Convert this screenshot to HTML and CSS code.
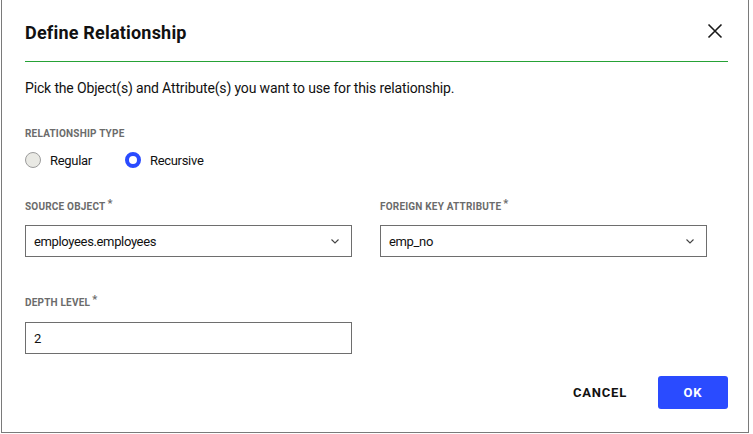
FILE: index.html
```html
<!DOCTYPE html>
<html>
<head>
<meta charset="utf-8">
<link rel="stylesheet" href="styles.css">
</head>
<body>
<div class="dialog">
  <div class="header">
    <h1 class="title">Define Relationship</h1>
    <button class="close" aria-label="Close">
      <svg width="16" height="16" viewBox="0 0 16 16"><path d="M1.5 1.5 L14.5 14.5 M14.5 1.5 L1.5 14.5" stroke="#1a1a1a" stroke-width="1.6" fill="none"/></svg>
    </button>
  </div>
  <p class="desc">Pick the Object(s) and Attribute(s) you want to use for this relationship.</p>

  <div class="label">RELATIONSHIP TYPE</div>
  <div class="radios">
    <label class="radio"><span class="dot"></span>Regular</label>
    <label class="radio"><span class="dot on"></span>Recursive</label>
  </div>

  <div class="grid">
    <div class="field">
      <div class="label">SOURCE OBJECT<sup class="req">*</sup></div>
      <div class="select"><span>employees.employees</span>
        <svg class="chev" width="8" height="5" viewBox="0 0 8 5"><path d="M0.5 0.5 L4 4 L7.5 0.5" stroke="#444" stroke-width="1.1" fill="none"/></svg>
      </div>
    </div>
    <div class="field">
      <div class="label">FOREIGN KEY ATTRIBUTE<sup class="req">*</sup></div>
      <div class="select"><span>emp_no</span>
        <svg class="chev" width="8" height="5" viewBox="0 0 8 5"><path d="M0.5 0.5 L4 4 L7.5 0.5" stroke="#444" stroke-width="1.1" fill="none"/></svg>
      </div>
    </div>
    <div class="field depth">
      <div class="label">DEPTH LEVEL<sup class="req">*</sup></div>
      <div class="input">2</div>
    </div>
  </div>

  <div class="actions">
    <button class="btn cancel">CANCEL</button>
    <button class="btn ok">OK</button>
  </div>
</div>
</body>
</html>
```

FILE: styles.css
```css
html, body {
  margin: 0;
  padding: 0;
  background: #ffffff;
}
body {
  font-family: Roboto, "Liberation Sans", sans-serif;
  color: #111;
}
.dialog {
  box-sizing: border-box;
  margin-left: 1px;
  width: 748px;
  height: 433px;
  border: 1px solid #7a7a7a;
  border-top: none;
  padding: 0 20px 0 23px;
  background: #fff;
}
.header {
  display: flex;
  align-items: center;
  justify-content: space-between;
  border-bottom: 1px solid #26a236;
  padding-top: 3px;
  box-sizing: border-box;
  height: 62px;
}
.title {
  margin: 0;
  font-size: 18px;
  font-weight: 700;
  letter-spacing: 0.2px;
  color: #111;
}
.close {
  border: none;
  background: none;
  padding: 0;
  margin-right: 5px;
  margin-top: -3px;
  width: 16px;
  height: 16px;
  display: flex;
}
.desc {
  margin: 16px 0 0;
  font-size: 14px;
  line-height: 20px;
  letter-spacing: -0.15px;
  color: #111;
}
.label {
  font-size: 10px;
  line-height: 12px;
  font-weight: 700;
  color: #6b6b6b;
  letter-spacing: 0.2px;
  margin-top: 30px;
}
.req {
  font-size: 11px;
  line-height: 0;
  margin-left: 2px;
  vertical-align: 3px;
}
.radios {
  display: flex;
  gap: 33px;
  margin-top: 12px;
  height: 16px;
  align-items: center;
}
.radio {
  display: flex;
  align-items: center;
  gap: 9px;
  font-size: 13px;
  letter-spacing: -0.3px;
  color: #111;
}
.dot {
  box-sizing: border-box;
  width: 16px;
  height: 16px;
  border-radius: 50%;
  border: 1px solid #9c9c9c;
  background: #e9e9e4;
}
.dot.on {
  border: 4px solid #2a4bff;
  background: #fff;
}
.grid {
  display: grid;
  grid-template-columns: 327px 327px;
  column-gap: 28px;
}
.field .label {
  margin-top: 33px;
}
.field.depth .label {
  margin-top: 40px;
}
.select, .input {
  box-sizing: border-box;
  margin-top: 12px;
  height: 32px;
  border: 1px solid #6e6e6e;
  display: flex;
  align-items: center;
  justify-content: space-between;
  padding: 0 12px 0 8px;
  font-size: 13px;
  letter-spacing: -0.35px;
  color: #111;
}
.input {
  margin-top: 13px;
}
.chev {
  display: block;
}
.actions {
  display: flex;
  justify-content: flex-end;
  align-items: center;
  gap: 31px;
  margin-top: 22px;
}
.btn {
  font-family: Roboto, "Liberation Sans", sans-serif;
  font-size: 13px;
  font-weight: 700;
  letter-spacing: 0.8px;
  border: none;
  background: none;
  cursor: pointer;
}
.cancel {
  color: #111;
  padding: 0;
}
.ok {
  width: 70px;
  height: 33px;
  border-radius: 3px;
  background: #2a4bff;
  color: #fff;
}
```
